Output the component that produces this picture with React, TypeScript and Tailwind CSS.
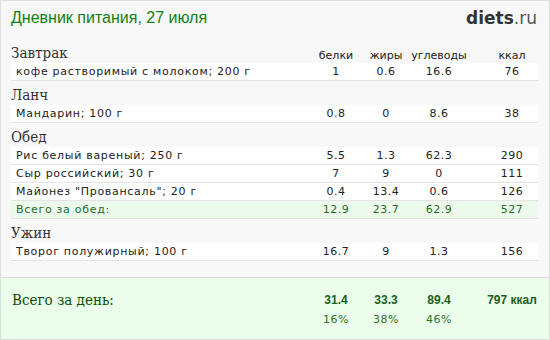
import React from "react";

type Item = { name: string; p: string; f: string; c: string; k: string };

const sections: { title: string; items: Item[]; total?: Item }[] = [
  { title: "Завтрак", items: [{ name: "кофе растворимый с молоком; 200 г", p: "1", f: "0.6", c: "16.6", k: "76" }] },
  { title: "Ланч", items: [{ name: "Мандарин; 100 г", p: "0.8", f: "0", c: "8.6", k: "38" }] },
  {
    title: "Обед",
    items: [
      { name: "Рис белый вареный; 250 г", p: "5.5", f: "1.3", c: "62.3", k: "290" },
      { name: "Сыр российский; 30 г", p: "7", f: "9", c: "0", k: "111" },
      { name: 'Майонез "Провансаль"; 20 г', p: "0.4", f: "13.4", c: "0.6", k: "126" },
    ],
    total: { name: "Всего за обед:", p: "12.9", f: "23.7", c: "62.9", k: "527" },
  },
  { title: "Ужин", items: [{ name: "Творог полужирный; 100 г", p: "16.7", f: "9", c: "1.3", k: "156" }] },
];

const grid = "grid grid-cols-[1fr_50px_50px_56px_19px_52px]";
const serif = "font-['DejaVu_Serif',serif] [font-stretch:condensed]";
const sans = "font-['DejaVu_Sans',sans-serif]";

function Row({ it, total }: { it: Item; total?: boolean }) {
  return (
    <div
      className={`${grid} h-[18px] items-center border-b border-[#e4e4e4] pl-[5px] text-[11px] leading-none tracking-[0.5px] ${sans} ${
        total ? "bg-[#eef9ee] text-[#1f6e1f]" : "bg-white text-[#222]"
      }`}
    >
      <div className="whitespace-nowrap tracking-[0.7px]">{it.name}</div>
      <div className="text-center">{it.p}</div>
      <div className="text-center">{it.f}</div>
      <div className="text-center">{it.c}</div>
      <div />
      <div className="text-center">{it.k}</div>
    </div>
  );
}

export default function App() {
  const head = `text-center text-[11px] leading-none text-[#222] whitespace-nowrap ${sans}`;
  const bold = "text-center text-[12px] font-bold text-[#1d5e1d] font-['Liberation_Sans',sans-serif] whitespace-nowrap";
  return (
    <div className="w-[550px] h-[340px] bg-[#f8f8f8] border border-[#dedede] flex flex-col overflow-hidden">
      <div className="h-[38px] flex items-start justify-between pl-[10px] pr-[12px] pt-[7px]">
        <div className="text-[16px] leading-[20px] text-[#118011] font-['Liberation_Sans',sans-serif]">
          Дневник питания, 27 июля
        </div>
        <div className={`text-[17px] leading-[20px] ${sans}`}>
          <span className="font-bold text-[#333]">diets</span>
          <span className="text-[#555]">.ru</span>
        </div>
      </div>
      <div className="px-[10px] pr-[11px]">
        {sections.map((s, i) => (
          <div key={s.title}>
            <div className={`${grid} h-[24px] items-end pb-[2px]`}>
              <div className={`text-[15px] leading-none text-[#333] ${serif}`}>{s.title}</div>
              {i === 0 && (
                <>
                  <div className={head}>белки</div>
                  <div className={head}>жиры</div>
                  <div className={head}>углеводы</div>
                  <div />
                  <div className={head}>ккал</div>
                </>
              )}
            </div>
            {s.items.map((it) => (
              <Row key={it.name} it={it} />
            ))}
            {s.total && <Row it={s.total} total />}
          </div>
        ))}
      </div>
      <div className="flex-1" />
      <div className="h-[62px] border-t border-[#dcdcdc] bg-[#ebfdeb] px-[10px] pr-[11px] pt-[12px]">
        <div className={`${grid} items-center h-[20px]`}>
          <div className={`text-[15px] leading-none text-[#0d4f0d] pl-[1px] ${serif}`}>Всего за день:</div>
          <div className={bold}>31.4</div>
          <div className={bold}>33.3</div>
          <div className={bold}>89.4</div>
          <div />
          <div className={bold}>797 ккал</div>
        </div>
        <div className={`${grid} items-center h-[20px] text-[11px] tracking-[0.5px] text-[#2a732a] ${sans}`}>
          <div />
          <div className="text-center">16%</div>
          <div className="text-center">38%</div>
          <div className="text-center">46%</div>
          <div />
          <div />
        </div>
      </div>
    </div>
  );
}
